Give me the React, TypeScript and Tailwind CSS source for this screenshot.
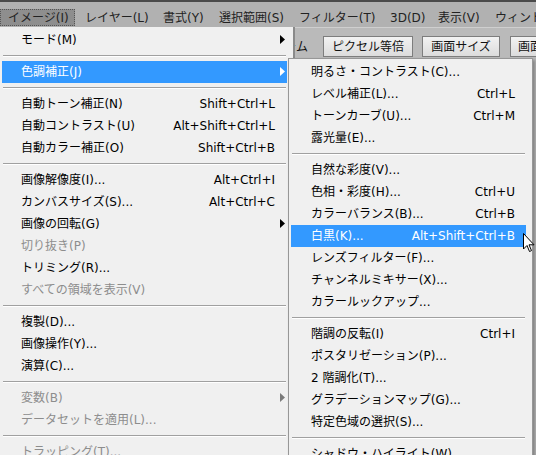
import { ReactNode } from 'react';

type Row =
  | { sep: true }
  | { sep?: false; label: string; shortcut?: string; arrow?: boolean; disabled?: boolean; active?: boolean };

const mainItems: Row[] = [
  { label: 'モード(M)', arrow: true },
  { sep: true },
  { label: '色調補正(J)', arrow: true, active: true },
  { sep: true },
  { label: '自動トーン補正(N)', shortcut: 'Shift+Ctrl+L' },
  { label: '自動コントラスト(U)', shortcut: 'Alt+Shift+Ctrl+L' },
  { label: '自動カラー補正(O)', shortcut: 'Shift+Ctrl+B' },
  { sep: true },
  { label: '画像解像度(I)...', shortcut: 'Alt+Ctrl+I' },
  { label: 'カンバスサイズ(S)...', shortcut: 'Alt+Ctrl+C' },
  { label: '画像の回転(G)', arrow: true },
  { label: '切り抜き(P)', disabled: true },
  { label: 'トリミング(R)...' },
  { label: 'すべての領域を表示(V)', disabled: true },
  { sep: true },
  { label: '複製(D)...' },
  { label: '画像操作(Y)...' },
  { label: '演算(C)...' },
  { sep: true },
  { label: '変数(B)', arrow: true, disabled: true },
  { label: 'データセットを適用(L)...', disabled: true },
  { sep: true },
  { label: 'トラッピング(T)...', disabled: true },
];

const subItems: Row[] = [
  { label: '明るさ・コントラスト(C)...' },
  { label: 'レベル補正(L)...', shortcut: 'Ctrl+L' },
  { label: 'トーンカーブ(U)...', shortcut: 'Ctrl+M' },
  { label: '露光量(E)...' },
  { sep: true },
  { label: '自然な彩度(V)...' },
  { label: '色相・彩度(H)...', shortcut: 'Ctrl+U' },
  { label: 'カラーバランス(B)...', shortcut: 'Ctrl+B' },
  { label: '白黒(K)...', shortcut: 'Alt+Shift+Ctrl+B', active: true },
  { label: 'レンズフィルター(F)...' },
  { label: 'チャンネルミキサー(X)...' },
  { label: 'カラールックアップ...' },
  { sep: true },
  { label: '階調の反転(I)', shortcut: 'Ctrl+I' },
  { label: 'ポスタリゼーション(P)...' },
  { label: '2 階調化(T)...' },
  { label: 'グラデーションマップ(G)...' },
  { label: '特定色域の選択(S)...' },
  { sep: true },
  { label: 'シャドウ・ハイライト(W)...' },
];

function Arrow({ color }: { color: string }) {
  return (
    <svg width="5" height="9" viewBox="0 0 5 9" className="absolute right-[2px] top-[6px]">
      <path d="M0 0 L5 4.5 L0 9 Z" fill={color} />
    </svg>
  );
}

function MenuRows({ rows, pl, pr }: { rows: Row[]; pl: string; pr: string }) {
  return (
    <>
      {rows.map((r, i) => {
        if (r.sep) {
          return (
            <div key={i} className="h-[10px] px-[1px] pt-[4px]">
              <div className="h-px bg-[#a0a0a0]" />
              <div className="h-px bg-white" />
            </div>
          );
        }
        const color = r.active ? 'text-white' : r.disabled ? 'text-[#8d8d8d]' : 'text-[#000]';
        return (
          <div
            key={i}
            className={`relative flex h-[22px] items-center justify-between ${pl} ${pr} ${color} ${r.active ? 'bg-[#3399ff]' : ''}`}
          >
            <span className="whitespace-nowrap">{r.label}</span>
            {r.shortcut && <span className="whitespace-nowrap">{r.shortcut}</span>}
            {r.arrow && <Arrow color={r.active ? '#fff' : r.disabled ? '#7a7a7a' : '#000'} />}
          </div>
        );
      })}
    </>
  );
}

function ToolButton({ children, w }: { children: ReactNode; w: string }) {
  return (
    <div
      className={`${w} flex h-[21px] shrink-0 items-center justify-center whitespace-nowrap border border-[#7d7d7d] bg-gradient-to-b from-[#f2f2f2] to-[#dcdcdc] text-[12px] text-[#111]`}
    >
      {children}
    </div>
  );
}

export default function App() {
  const menubar = [
    { t: 'イメージ(I)', w: 'w-[78px]', on: true },
    { t: 'レイヤー(L)', w: 'w-[78px]' },
    { t: '書式(Y)', w: 'w-[56px]' },
    { t: '選択範囲(S)', w: 'w-[80px]' },
    { t: 'フィルター(T)', w: 'w-[91px]' },
    { t: '3D(D)', w: 'w-[48px]' },
    { t: '表示(V)', w: 'w-[57px]' },
    { t: 'ウィンドウ(W)', w: 'w-[90px]' },
  ];

  return (
    <div className="relative h-[455px] w-[536px] overflow-hidden bg-[#b9b9b9] font-['DejaVu_Sans','Noto_Sans_CJK_JP',sans-serif] text-[12px] leading-none">
      {/* menu bar */}
      <div className="flex h-[27px] border-t-2 border-[#4a4a4a] bg-[#b1b1b1] pt-[7px]">
        {menubar.map((m) => (
          <div key={m.t} className={`${m.w} shrink-0`}>
            <div
              className={`flex h-[17px] items-center whitespace-nowrap pl-[7px] text-[#222] ${
                m.on ? 'w-[75px] border border-dotted border-[#555] bg-[#8e8e8e] pl-[6px]' : ''
              }`}
            >
              {m.t}
            </div>
          </div>
        ))}
      </div>

      {/* options bar */}
      <div className="flex h-[31px] items-end border-t border-[#cfcfcf] bg-[#bababa] pb-[1px] pl-[230px]">
        <div className="mb-[4px] w-[78px] shrink-0 text-right text-[12px] text-[#111]">ズーム</div>
        <div className="ml-[15px] shrink-0">
          <ToolButton w="w-[90px]">ピクセル等倍</ToolButton>
        </div>
        <div className="ml-[9px] shrink-0">
          <ToolButton w="w-[78px]">画面サイズ</ToolButton>
        </div>
        <div className="ml-[10px] shrink-0">
          <ToolButton w="w-[100px]">画面にフィット</ToolButton>
        </div>
      </div>

      {/* main dropdown */}
      <div className="absolute left-0 top-[27px] w-[295px] border-r-2 border-[#8a8a8a] bg-[#f0f0f0] pt-[2px]">
        <div className="ml-[2px] w-[285px]">
          <MenuRows rows={mainItems} pl="pl-[19px]" pr="pr-[12px]" />
        </div>
      </div>

      {/* submenu */}
      <div className="absolute left-[288px] top-[58px] w-[245px] border border-[#979797] bg-[#f0f0f0] pt-[2px] shadow-[2px_2px_3px_rgba(0,0,0,0.3)]">
        <div className="ml-[2px] w-[235px]">
          <MenuRows rows={subItems} pl="pl-[20px]" pr="pr-[11px]" />
        </div>
      </div>

      {/* mouse cursor */}
      <svg width="12" height="20" viewBox="0 0 12 20" className="absolute left-[523px] top-[233px]">
        <path d="M0.5 0.5 L0.5 16 L4 12.5 L6.5 18.5 L8.5 17.6 L6 11.8 L11 11.8 Z" fill="#fff" stroke="#000" strokeWidth="1" />
      </svg>
    </div>
  );
}
